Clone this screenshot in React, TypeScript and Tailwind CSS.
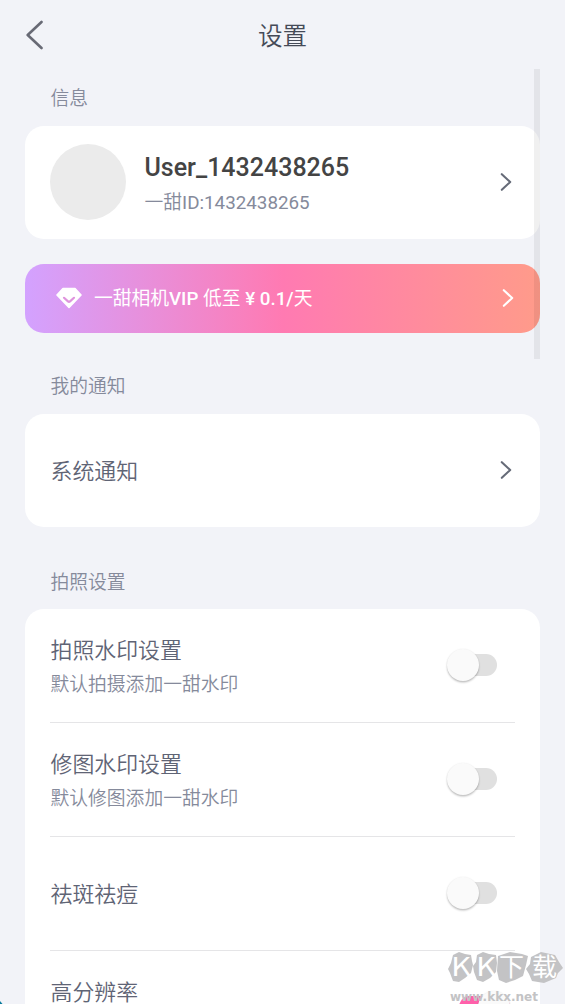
import React from "react";

const Chevron = ({ className }: { className: string }) => (
  <svg viewBox="0 0 12 20" className={className} fill="none" stroke="currentColor" strokeWidth="2.1" strokeLinecap="round" strokeLinejoin="round">
    <path d="M1.8 2.2 10.2 10 1.8 17.8" />
  </svg>
);

const SectionLabel = ({ children, className }: { children: React.ReactNode; className: string }) => (
  <h2 className={`pl-[25.5px] text-[18.75px] leading-[28px] font-[350] text-[#858a9b] ${className}`}>{children}</h2>
);

const Toggle = ({ on = false }: { on?: boolean }) => (
  <div className={`relative h-8 w-[64px] shrink-0 ${on ? "text-[#ff60aa]" : "text-[#e0e0e0]"}`}>
    <div className={`absolute top-[5px] h-[22px] rounded-full bg-current ${on ? "left-[13px] w-[51px]" : "left-[3px] w-[48px]"}`} />
    <div
      className={`absolute top-0 size-8 rounded-full bg-[#fafafa] shadow-[0_1.5px_2px_rgba(0,0,0,0.24),0_0_2px_rgba(0,0,0,0.06)] ${on ? "left-[32px]" : "left-[0.5px]"}`}
    />
  </div>
);

const SettingRow = ({ title, hint, on, last }: { title: string; hint?: string; on?: boolean; last?: boolean }) => (
  <div className={`flex h-[114px] shrink-0 items-center justify-between pt-px ${last ? "" : "border-b border-[#e5e5e7]"}`}>
    <div className={`pl-[0.5px] ${last ? "pb-[31px]" : hint ? "pt-[4px]" : "pt-px"}`}>
      <div className="text-[21.9px] leading-[34px] font-[350] text-[#5f6475]">{title}</div>
      {hint && <div className="text-[18.8px] leading-[34px] font-[350] text-[#858a9b]">{hint}</div>}
    </div>
    <div className="mb-[3px] pr-[5px]">
      <Toggle on={on} />
    </div>
  </div>
);

const Watermark = () => (
  <svg className="absolute top-[949px] left-[445px] h-[55px] w-[120px] overflow-visible" viewBox="0 0 120 55">
    <g fill="#c3c3c5">
      <path d="M8 6 12 4 14 3 20 5 26 6 27 12 28 16 26 24 20 29 14 33 8 32 5 24 3 20 6 14Z" />
      <path d="M32 6 38 3 44 5 51 6 52 14 51 23 45 29 38 33 32 31 29 23 28 17 31 13Z" />
      <path d="M53 7 65 3 77 5 83 7 81 16 78 27 70 31 61 34 54 31 52 22Z" />
      <path d="M86 8 96 3 110 6 114 13 118 19 113 24 111 29 99 34 87 32 84 25 81 20 85 15Z" />
    </g>
    <g fill="#fff" fontFamily="'Noto Sans CJK SC', sans-serif">
      <text x="6" y="27" fontSize="26" textLength="20" lengthAdjust="spacingAndGlyphs">K</text>
      <text x="31" y="27" fontSize="26" textLength="20" lengthAdjust="spacingAndGlyphs">K</text>
      <text x="54" y="27" fontSize="25">下</text>
      <text x="87" y="27" fontSize="25">载</text>
    </g>
    <text x="5" y="52" fill="#c3c3c5" fontFamily="'DejaVu Sans', sans-serif" fontWeight="bold" fontSize="11.5" textLength="88" lengthAdjust="spacingAndGlyphs">www.kkx.net</text>
  </svg>
);

export default function App() {
  return (
    <div className="relative flex h-[1004px] w-[565px] flex-col overflow-hidden bg-[#f2f3f8] font-[Roboto,'Noto_Sans_CJK_SC',sans-serif]">
      <header className="grid h-[69px] shrink-0 grid-cols-[1fr_auto_1fr] items-center px-[25px]">
        <svg viewBox="0 0 18 30" className="h-[30px] w-[18px] text-[#686a75]" fill="none" stroke="currentColor" strokeWidth="2.6" strokeLinecap="round" strokeLinejoin="round">
          <path d="M16.5 2 2.7 15 16.5 28" />
        </svg>
        <h1 className="mt-[4px] text-[24.6px] leading-[36px] font-[350] text-[#454a57]">设置</h1>
        <span />
      </header>

      <main className="flex flex-1 flex-col px-[25px]">
        <SectionLabel className="mt-[16px]">信息</SectionLabel>

        <section className="mt-[12.5px] flex h-[113px] shrink-0 items-center rounded-[19px] bg-white pr-[28px] pl-[25px]">
          <div className="size-[76px] rounded-full bg-[#ebebeb]" />
          <div className="mt-[5px] ml-[18.5px] flex-1">
            <div className="text-[25px] leading-[36px] font-medium text-[#444]">User_1432438265</div>
            <div className="text-[18.8px] leading-[34px] text-[#858a9b]">
              <span className="font-[350]">一甜</span>ID:1432438265
            </div>
          </div>
          <Chevron className="mb-px h-5 w-3 text-[#666b78]" />
        </section>

        <section className="mt-[25px] flex h-[69px] shrink-0 items-center rounded-[19px] bg-[linear-gradient(90deg,#d3a2ff_0%,#ff7ab2_50%,#ff9b8a_100%)] pr-[26px] pl-[31px] text-white">
          <svg viewBox="0 0 26 22" className="h-[22px] w-[26px]">
            <path d="M7 1.5H19L25 8 13 20.5 1 8Z" fill="currentColor" stroke="currentColor" strokeWidth="1.6" strokeLinejoin="round" />
            <path d="M8 10.8 12 14.4Q13 15.3 14 14.4L18 10.8" fill="none" stroke="#df94dd" strokeWidth="2.2" strokeLinecap="round" strokeLinejoin="round" />
          </svg>
          <div className="mt-[2px] ml-[12px] flex-1 text-[18.75px] leading-[28px]">
            一甜相机<span className="font-medium">VIP </span>低至<span className="font-medium"> ¥ 0.1/</span>天
          </div>
          <Chevron className="h-5 w-3" />
        </section>

        <SectionLabel className="mt-[40.5px]">我的通知</SectionLabel>
        <section className="mt-[13px] flex h-[113px] shrink-0 items-center justify-between rounded-[19px] bg-white pr-[28px] pl-[25.5px]">
          <div className="mt-[3px] text-[21.9px] leading-[34px] font-[350] text-[#5f6475]">系统通知</div>
          <Chevron className="mb-[2px] h-5 w-3 text-[#666b78]" />
        </section>

        <SectionLabel className="mt-[41.5px]">拍照设置</SectionLabel>
        <section className="mt-[12.5px] flex shrink-0 flex-col rounded-t-[19px] bg-white px-[25px]">
          <SettingRow title="拍照水印设置" hint="默认拍摄添加一甜水印" />
          <SettingRow title="修图水印设置" hint="默认修图添加一甜水印" />
          <SettingRow title="祛斑祛痘" />
          <SettingRow title="高分辨率" on last />
        </section>
      </main>

      <div className="absolute top-[69px] left-[534px] h-[290px] w-[6px] bg-black/6" />
      <Watermark />
      <svg className="absolute bottom-0 left-0 h-[3px] w-[3px]" viewBox="0 0 3 3">
        <path d="M0 0 2.5 3H0Z" fill="#087a9c" />
      </svg>
    </div>
  );
}
